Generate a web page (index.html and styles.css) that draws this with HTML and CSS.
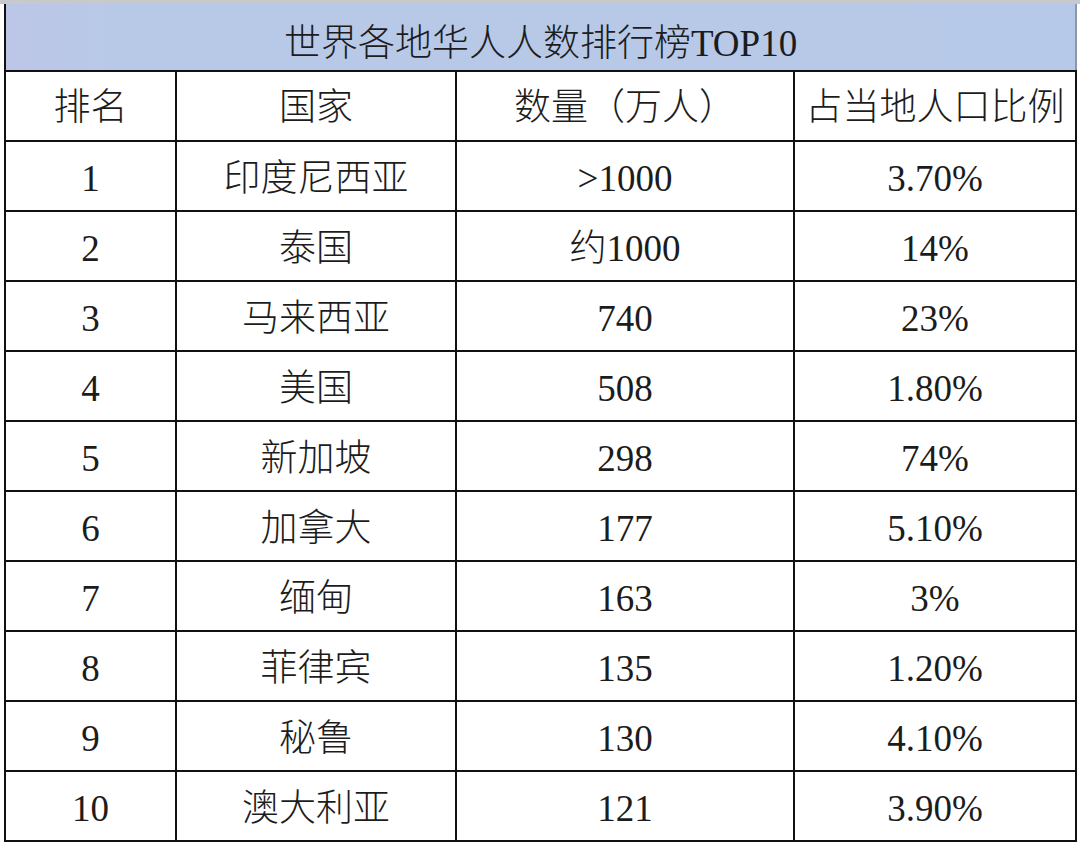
FILE: index.html
```html
<!DOCTYPE html>
<html lang="zh-CN">
<head>
<meta charset="utf-8">
<title>世界各地华人人数排行榜TOP10</title>
<link rel="stylesheet" href="styles.css">
</head>
<body>
<div class="topbar"></div>
<div class="wrap">
<table class="rank">
  <colgroup>
    <col class="c1"><col class="c2"><col class="c3"><col class="c4">
  </colgroup>
  <thead>
    <tr class="title"><th colspan="4">世界各地华人人数排行榜TOP10</th></tr>
    <tr class="head"><th>排名</th><th>国家</th><th>数量（万人）</th><th>占当地人口比例</th></tr>
  </thead>
  <tbody>
    <tr><td>1</td><td>印度尼西亚</td><td>&gt;1000</td><td>3.70%</td></tr>
    <tr><td>2</td><td>泰国</td><td>约1000</td><td>14%</td></tr>
    <tr><td>3</td><td>马来西亚</td><td>740</td><td>23%</td></tr>
    <tr><td>4</td><td>美国</td><td>508</td><td>1.80%</td></tr>
    <tr><td>5</td><td>新加坡</td><td>298</td><td>74%</td></tr>
    <tr><td>6</td><td>加拿大</td><td>177</td><td>5.10%</td></tr>
    <tr><td>7</td><td>缅甸</td><td>163</td><td>3%</td></tr>
    <tr><td>8</td><td>菲律宾</td><td>135</td><td>1.20%</td></tr>
    <tr><td>9</td><td>秘鲁</td><td>130</td><td>4.10%</td></tr>
    <tr><td>10</td><td>澳大利亚</td><td>121</td><td>3.90%</td></tr>
  </tbody>
</table>
</div>
</body>
</html>
```
FILE: styles.css
```css
html, body {
  margin: 0;
  padding: 0;
  background: #ffffff;
}
body {
  width: 1080px;
  height: 848px;
  overflow: hidden;
  font-family: "Liberation Serif", "Noto Sans CJK SC", serif;
  color: #1c1c1c;
}
.topbar {
  height: 4px;
  background: #c6c9cd;
}
.wrap {
  padding-left: 4px;
}
.rank {
  border-collapse: collapse;
  table-layout: fixed;
  width: 1071px;
}
.c1 { width: 171px; }
.c2 { width: 280px; }
.c3 { width: 338px; }
.c4 { width: 282px; }
.rank th, .rank td {
  border: 2px solid #111111;
  padding: 0;
  text-align: center;
  vertical-align: middle;
  font-size: 37px;
  font-weight: 300;
  line-height: 1;
  white-space: nowrap;
}
.title th {
  background: linear-gradient(90deg, #bcc6e6 0%, #b8c9e7 10%, #b7c9e8 100%);
  border-top: none;
  border-right-color: #8e97a8;
  height: 54px;
  padding-top: 12px;
}
.head th {
  height: 66px;
  padding-top: 2px;
}
.rank td {
  height: 64px;
  padding-top: 4px;
}
```
